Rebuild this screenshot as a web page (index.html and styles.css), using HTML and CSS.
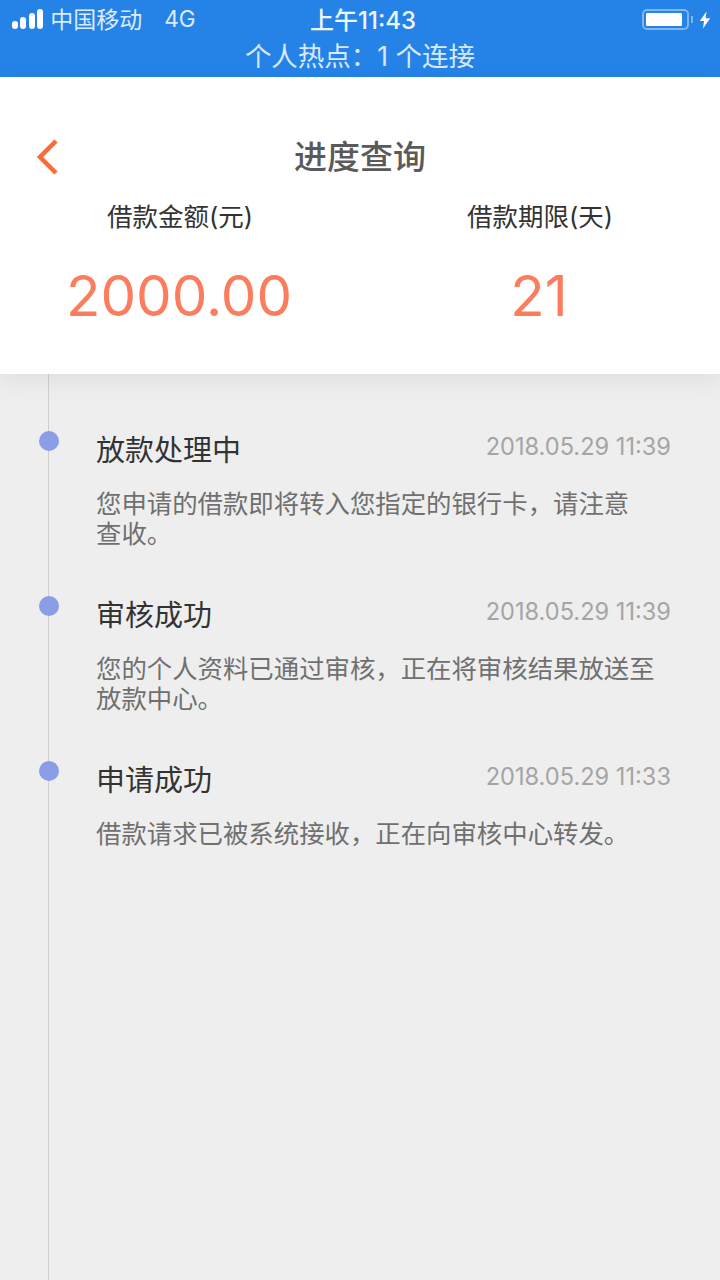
FILE: index.html

```html
<!DOCTYPE html>
<html lang="zh-CN">
<head>
    <meta charset="UTF-8">
    <meta name="viewport" content="width=device-width, initial-scale=1.0">
    <title>进度查询</title>
    <link rel="stylesheet" href="styles.css">
</head>
<body>
    <div class="status-bar">
        <div class="status-row">
            <div class="status-left">
                <div class="signal">
                    <span class="s1"></span><span class="s2"></span><span class="s3"></span><span class="s4"></span>
                </div>
                <span class="carrier">中国移动</span>
                <span class="network">4G</span>
            </div>
            <div class="clock">上午11:43</div>
            <div class="status-right">
                <div class="battery"><div class="battery-level"></div></div>
                <div class="battery-tip"></div>
                <svg class="bolt" width="12" height="18" viewBox="0 0 12 18">
                    <path d="M7.5 0.5 L0.8 10 H5 L4 17.5 L11.2 7.2 H6.6 Z" fill="#fff"/>
                </svg>
            </div>
        </div>
        <div class="hotspot">个人热点：1 个连接</div>
    </div>

    <div class="summary">
        <div class="title-bar">
            <svg class="back" width="24" height="38" viewBox="0 0 24 38">
                <path d="M21 3 L5 19 L21 35" fill="none" stroke="#fc6a38" stroke-width="4.5"/>
            </svg>
            <h1>进度查询</h1>
        </div>
        <div class="amounts">
            <div class="amount">
                <div class="amount-label">借款金额(元)</div>
                <div class="amount-value">2000.00</div>
            </div>
            <div class="amount">
                <div class="amount-label">借款期限(天)</div>
                <div class="amount-value">21</div>
            </div>
        </div>
    </div>

    <div class="timeline">
        <div class="step">
            <div class="step-head">
                <span class="step-title">放款处理中</span>
                <span class="step-time">2018.05.29 11:39</span>
            </div>
            <p class="step-text">您申请的借款即将转入您指定的银行卡，请注意<br>查收。</p>
        </div>
        <div class="step">
            <div class="step-head">
                <span class="step-title">审核成功</span>
                <span class="step-time">2018.05.29 11:39</span>
            </div>
            <p class="step-text">您的个人资料已通过审核，正在将审核结果放送至放款中心。</p>
        </div>
        <div class="step">
            <div class="step-head">
                <span class="step-title">申请成功</span>
                <span class="step-time">2018.05.29 11:33</span>
            </div>
            <p class="step-text">借款请求已被系统接收，正在向审核中心转发。</p>
        </div>
    </div>
</body>
</html>
```

FILE: styles.css

```css
body {
    margin: 0;
    width: 720px;
    height: 1280px;
    overflow: hidden;
    display: flex;
    flex-direction: column;
    background: #eeeeee;
    font-family: Inter, "Noto Sans CJK SC", sans-serif;
}

/* status bar */
.status-bar {
    height: 77px;
    background: #2583e8;
    color: #fff;
    flex-shrink: 0;
}

.status-row {
    height: 36px;
    padding: 0 9px 0 12px;
    display: grid;
    grid-template-columns: 1fr auto 1fr;
    align-items: center;
    box-sizing: border-box;
}

.status-left {
    display: flex;
    align-items: center;
    font-size: 23px;
    color: #dcebfb;
}

.signal {
    display: flex;
    align-items: flex-end;
    gap: 2.4px;
    margin: 1px 7px 0 0;
}

.signal span {
    width: 6px;
    background: #fff;
    border-radius: 3px;
}

.s1 { height: 8px; }
.s2 { height: 12px; }
.s3 { height: 16px; }
.s4 { height: 20px; }

.network {
    margin-left: 22px;
    font-size: 22.5px;
}

.clock {
    margin-left: 3px;
    font-size: 24px;
    font-weight: 500;
    color: #eef6fe;
}

.status-right {
    display: flex;
    align-items: center;
    justify-content: flex-end;
    margin-top: 3px;
}

.battery {
    width: 47px;
    height: 21px;
    box-sizing: border-box;
    border: 2px solid #7fb6f1;
    border-radius: 5px;
    padding: 2px;
}

.battery-level {
    width: 36px;
    height: 13px;
    background: #fff;
    border-radius: 1px;
}

.battery-tip {
    width: 2px;
    height: 7px;
    margin-left: 2px;
    background: #7fb6f1;
}

.bolt {
    margin-left: 6px;
}

.hotspot {
    margin-top: 1px;
    text-align: center;
    font-size: 26.5px;
    line-height: 38px;
    color: #d9e9fb;
}

/* white header */
.summary {
    height: 297px;
    flex-shrink: 0;
    background: #fff;
    box-shadow: 0 6px 24px rgba(0, 0, 0, 0.07);
    position: relative;
    z-index: 1;
}

.title-bar {
    height: 120px;
    display: flex;
    align-items: center;
    justify-content: center;
    padding-top: 36px;
    box-sizing: border-box;
    position: relative;
}

.title-bar h1 {
    margin: 0;
    font-size: 33px;
    font-weight: 500;
    color: #5a5a5a;
}

.back {
    position: absolute;
    left: 35px;
    top: 61px;
}

.amounts {
    display: flex;
}

.amount {
    width: 360px;
    text-align: center;
}

.amount-label {
    font-size: 25.5px;
    line-height: 40px;
    color: #333;
}

.amount-value {
    margin: 24px 2px 0 0;
    font-size: 56.5px;
    line-height: 70px;
    color: #fb7d5e;
}

/* timeline */
.timeline {
    flex: 1;
    margin-left: 48px;
    border-left: 1px solid #cfcfcf;
    padding: 53px 49px 0 47px;
}

.step {
    position: relative;
    height: 165px;
}

.step::before {
    content: '';
    position: absolute;
    left: -57px;
    top: 4px;
    width: 20px;
    height: 20px;
    border-radius: 50%;
    background: #8a9de6;
}

.step-head {
    display: flex;
    justify-content: space-between;
    align-items: center;
    height: 42px;
}

.step-title {
    font-size: 29px;
    color: #333;
}

.step-time {
    margin-bottom: 4px;
    font-size: 23.6px;
    color: #a5a5a5;
}

.step-text {
    margin: 20px 0 0;
    font-size: 25.4px;
    line-height: 30px;
    color: #707070;
}
```
